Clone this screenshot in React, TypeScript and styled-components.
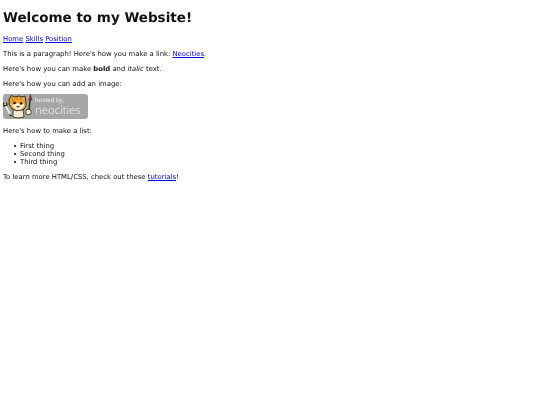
import styled, { createGlobalStyle } from "styled-components";

const Global = createGlobalStyle`
  html, body {
    margin: 0;
    background: #fff;
  }
  body {
    padding: 3.4px;
    font-family: "DejaVu Sans", Verdana, sans-serif;
    font-size: 6.85px;
    line-height: 8px;
    color: #111;
    text-rendering: geometricPrecision;
  }
  #root {
    will-change: transform;
  }
`;

const Title = styled.h1`
  font-size: 13.5px;
  font-weight: bold;
  line-height: 16px;
  margin: 7px 0 9px;
`;

const Para = styled.p<{ $gap?: number }>`
  margin: 0 0 ${(p) => p.$gap ?? 7}px;
`;

const Link = styled.a`
  color: #0000ee;
  text-decoration: underline;
`;

const Nav = styled.nav`
  margin: 0 0 6.5px;
`;

const Badge = styled.div`
  display: flex;
  width: 85px;
  height: 25px;
  margin: 0 0 8px;
  border-radius: 3px;
  background: #a6a6a6;
  overflow: hidden;
`;

const BadgeText = styled.div`
  display: flex;
  flex-direction: column;
  padding-top: 3px;
  font-family: "Open Sans", sans-serif;
  color: #f6f6f6;
`;

const Hosted = styled.span`
  font-size: 6px;
  line-height: 7px;
`;

const Brand = styled.span`
  font-size: 11.4px;
  font-weight: 300;
  line-height: 13px;
`;

const Mascot = styled.svg`
  flex: none;
`;

const List = styled.ul`
  margin: 7px 0;
  padding-left: 17px;
  list-style: none;
`;

const Item = styled.li`
  position: relative;

  &::before {
    content: "";
    position: absolute;
    left: -6px;
    top: 3px;
    width: 2.4px;
    height: 2.4px;
    border-radius: 50%;
    background: #111;
  }
`;

const App = () => (
  <>
    <Global />
    <Title>Welcome to my Website!</Title>
    <Nav>
      <Link href="#">Home</Link> <Link href="#">Skills</Link> <Link href="#">Position</Link>
    </Nav>
    <Para>
      This is a paragraph! Here's how you make a link: <Link href="#">Neocities</Link>.
    </Para>
    <Para>
      Here's how you can make <b>bold</b> and <i>italic</i> text.
    </Para>
    <Para $gap={6}>Here's how you can add an image:</Para>
    <Badge>
      <Mascot width="32" height="25" viewBox="0 0 32 25">
        {/* wrench */}
        <path d="M1.5 10 L7 20" stroke="#f0f0f0" strokeWidth="1.8" />
        <path d="M0.5 8.5 L1 12 L4 11 L3.5 8.5 M6 21 L9 22" stroke="#2a2520" strokeWidth="1.2" fill="none" />
        {/* body */}
        <path d="M10 15 L20 15 L21 23 Q15 25 10 23Z" fill="#f6ead0" stroke="#2a2117" strokeWidth="0.8" />
        {/* head */}
        <path d="M6 6 L8 1.5 L12 3 Q16 1 19 3 L22 2 L23 9 Q24 14 19 16 Q13 18 9 15 Q5 11 6 6Z" fill="#eda52f" stroke="#2a2117" strokeWidth="0.9" />
        <path d="M9 11 Q14 8 21 10 Q21 15 16 16 Q11 16 9 11Z" fill="#fbf0d6" />
        <path d="M9 4 L11 7 M14 3 L14.5 6 M18 3.5 L17.5 6" stroke="#a8661a" strokeWidth="0.8" />
        <circle cx="11.5" cy="9" r="1.3" fill="#1c1510" />
        <circle cx="18" cy="9.5" r="1.3" fill="#1c1510" />
        <path d="M13 12 Q15 15 17 12Z" fill="#7a2a1d" />
        {/* paintbrush */}
        <path d="M27 6 L26 17" stroke="#3a2a1c" strokeWidth="1.5" />
        <path d="M27.5 0.5 L29 6 L25.5 6Z" fill="#a8322a" stroke="#2a2117" strokeWidth="0.4" />
        <circle cx="25.5" cy="18" r="2.8" fill="#fbf0d6" stroke="#2a2117" strokeWidth="0.8" />
      </Mascot>
      <BadgeText>
        <Hosted>hosted by,</Hosted>
        <Brand>neocities</Brand>
      </BadgeText>
    </Badge>
    <Para>Here's how to make a list:</Para>
    <List>
      <Item>First thing</Item>
      <Item>Second thing</Item>
      <Item>Third thing</Item>
    </List>
    <Para>
      To learn more HTML/CSS, check out these <Link href="#">tutorials</Link>!
    </Para>
  </>
);

export default App;
